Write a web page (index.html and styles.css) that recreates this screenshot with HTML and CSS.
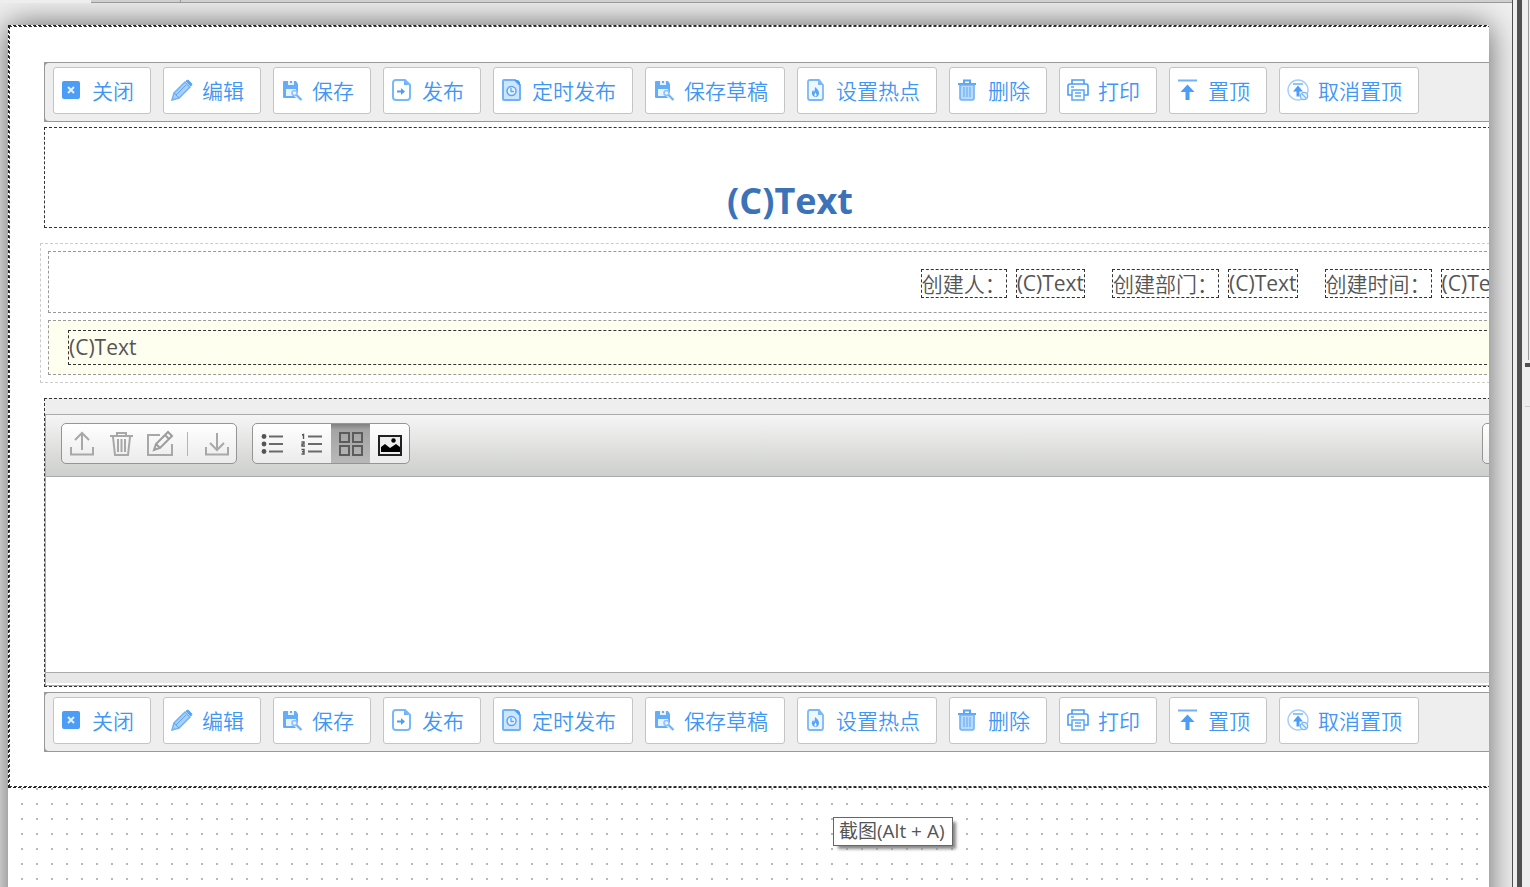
FILE: index.html
```html
<!DOCTYPE html>
<html lang="zh-CN">
<head>
    <meta charset="UTF-8">
    <meta name="viewport" content="width=device-width, initial-scale=1.0">
    <title>表单设计</title>
    <link rel="stylesheet" href="styles.css">
</head>
<body>
    <svg class="sprite" aria-hidden="true">
        <symbol id="i-close" viewBox="0 0 22 22">
            <rect x="1" y="2" width="18" height="18" rx="2" fill="#4b9df5"/>
            <path d="M7 8l6 6M13 8l-6 6" stroke="#e4f1fe" stroke-width="2"/>
        </symbol>
        <symbol id="i-edit" viewBox="0 0 22 22">
            <path d="M1 21l2-7L14 3l5 5L8 19z" fill="#a9d0fb" stroke="#6fb2f8" stroke-width="1.5"/>
            <path d="M5 16l10-10M3 14l5 5" stroke="#5aa6f6" fill="none"/>
            <path d="M15 2l2-1 4 4-1 2z" fill="#5aa6f6" stroke="#5aa6f6"/>
        </symbol>
        <symbol id="i-save" viewBox="0 0 22 22">
            <path d="M2 3q0-1 1-1h12l2 3v9h-2v5H3q-1 0-1-1z" fill="#66adf7"/>
            <path d="M7 2h6v4H7zM5 10h10v7H5z" fill="#e8f3fe"/>
            <path d="M9 2h2v2H9z" fill="#66adf7"/>
            <path d="M13 14l7 7" stroke="#e8f3fe" stroke-width="4"/>
            <circle cx="13.5" cy="14" r="2.500" fill="#e8f3fe" stroke="#8cc1f9" stroke-width="1.5"/>
            <path d="M15.500 16l5 5" stroke="#6fb2f8" stroke-width="2"/>
        </symbol>
        <symbol id="i-publish" viewBox="0 0 22 22">
            <path d="M5 1h9l5 5v12q0 3-3 3H5q-3 0-3-3V4q0-3 3-3z" fill="none" stroke="#7ab8f8" stroke-width="2"/>
            <path d="M13 1v5h5z" fill="#6fb2f8"/>
            <path d="M6 12.500h5" stroke="#4b9df5" stroke-width="2"/>
            <path d="M10 9l4 3.500-4 3.500z" fill="#4b9df5"/>
        </symbol>
        <symbol id="i-timing" viewBox="0 0 22 22">
            <path d="M3 1h11l5 5v14q0 1-1 1H3q-1 0-1-1V2q0-1 1-1z" fill="#cfe5fd" stroke="#6fb2f8" stroke-width="2"/>
            <path d="M13 1l6 6v-4l-2-2z" fill="#4b9df5"/>
            <circle cx="10.500" cy="12" r="4.500" fill="#e8f3fe" stroke="#5aa6f6" stroke-width="1.500"/>
            <path d="M10 9v3.500h3" fill="none" stroke="#5aa6f6" stroke-width="1.300"/>
        </symbol>
        <symbol id="i-hot" viewBox="0 0 22 22">
            <path d="M5 1h9l4 5v13q0 2-2 2H5q-2 0-2-2V3q0-2 2-2z" fill="#eef6ff" stroke="#7ab8f8" stroke-width="1.800"/>
            <path d="M13 1v5h5z" fill="#7ab8f8"/>
            <path d="M10 8c4 3 5 6 3 9q-2 2-5 0c-2-3-1-4 0-6l1 2q1-2 1-5z" fill="#5aa6f6"/>
            <path d="M10.500 13.500q2 3 0 4-2-1 0-4z" fill="#fff"/>
        </symbol>
        <symbol id="i-delete" viewBox="0 0 22 22">
            <path d="M1 5h18M7 4V1.500h6V4" fill="none" stroke="#5aa6f6" stroke-width="2"/>
            <path d="M3 6h14v13q0 2-2 2H5q-2 0-2-2z" fill="#b9d9fc" stroke="#6fb2f8" stroke-width="1.600"/>
            <path d="M7 8v10M10 8v10M13 8v10" stroke="#6fb2f8" stroke-width="1.300"/>
        </symbol>
        <symbol id="i-print" viewBox="0 0 22 22">
            <path d="M5 5V1h12v4M5 16H1V7q0-2 2-2h16q2 0 2 2v9h-4" fill="none" stroke="#4b9df5" stroke-width="1.600"/>
            <path d="M5 11h12v10H5zM8 14h6M8 17h6M4 8h3" fill="none" stroke="#5aa6f6" stroke-width="1.500"/>
        </symbol>
        <symbol id="i-top" viewBox="0 0 22 22">
            <path d="M1 1.500h19" stroke="#6fb2f8" stroke-width="2"/>
            <path d="M10.500 5.500l7 7.500h-5v8h-4v-8h-5z" fill="#4b9df5"/>
        </symbol>
        <symbol id="i-untop" viewBox="0 0 22 22">
            <circle cx="11" cy="11" r="10" fill="#fff" stroke="#a3cdfb" stroke-width="1.400"/>
            <path d="M6 5h10" stroke="#6fb2f8" stroke-width="1.500"/>
            <path d="M11 6.500l5 6h-3.500v5h-3v-5H6z" fill="#4b9df5"/>
            <circle cx="17" cy="17" r="3.700" fill="#e8f3fe" stroke="#7ab8f8" stroke-width="1.300"/>
            <path d="M14.500 14.500l5 5" stroke="#7ab8f8" stroke-width="1.300"/>
        </symbol>
    </svg>

    <main class="stage">
        <div class="tab-strip"><span class="tab active"></span><span class="tab"></span></div>
        <div class="canvas">
            <div class="paper">
                <div class="form">
                    <div class="form-inner">
                        <div class="toolbar-wrap">
                            <div class="toolbar">
                                <button class="tool-btn"><svg><use href="#i-close"/></svg>关闭</button>
                                <button class="tool-btn"><svg><use href="#i-edit"/></svg>编辑</button>
                                <button class="tool-btn"><svg><use href="#i-save"/></svg>保存</button>
                                <button class="tool-btn"><svg><use href="#i-publish"/></svg>发布</button>
                                <button class="tool-btn"><svg><use href="#i-timing"/></svg>定时发布</button>
                                <button class="tool-btn"><svg><use href="#i-save"/></svg>保存草稿</button>
                                <button class="tool-btn"><svg><use href="#i-hot"/></svg>设置热点</button>
                                <button class="tool-btn"><svg><use href="#i-delete"/></svg>删除</button>
                                <button class="tool-btn"><svg><use href="#i-print"/></svg>打印</button>
                                <button class="tool-btn"><svg><use href="#i-top"/></svg>置顶</button>
                                <button class="tool-btn"><svg><use href="#i-untop"/></svg>取消置顶</button>
                            </div>
                        </div>

                        <h1 class="title">(C)Text</h1>

                        <div class="info">
                            <div class="info-row">
                                <div class="field"><span class="box label">创建人：</span><span class="box">(C)Text</span></div>
                                <div class="field"><span class="box label">创建部门：</span><span class="box">(C)Text</span></div>
                                <div class="field"><span class="box label">创建时间：</span><span class="box">(C)Text</span></div>
                            </div>
                            <div class="info-body">
                                <div class="box body-text">(C)Text</div>
                            </div>
                        </div>

                        <div class="attach">
                            <div class="attach-bar">
                                <div class="btn-group">
                                    <button class="icon-btn" aria-label="上传">
                                        <svg viewBox="0 0 28 28"><path d="M3 17v7.500h22V17M14 20V3M7 10l7-7 7 7" fill="none" stroke="#a8a8a8" stroke-width="2"/></svg>
                                    </button>
                                    <button class="icon-btn" aria-label="删除">
                                        <svg viewBox="0 0 28 28"><path d="M3 6h23M10 5V3h9v2M6 7l2 18h13l2-18M11 9v13M14.500 9v13M18 9v13" fill="none" stroke="#a8a8a8" stroke-width="2"/></svg>
                                    </button>
                                    <button class="icon-btn" aria-label="编辑">
                                        <svg viewBox="0 0 28 28"><path d="M14 5H2v20h24V14" fill="none" stroke="#a8a8a8" stroke-width="2"/><path d="M8 20l2-6L22 2l4 4-12 12zM19 5l4 4M10 14l4 4" fill="none" stroke="#9c9c9c" stroke-width="2"/></svg>
                                    </button>
                                    <span class="divider"></span>
                                    <button class="icon-btn" aria-label="下载">
                                        <svg viewBox="0 0 28 28"><path d="M3 17v7.500h22V17M14 3v17M7 13l7 7 7-7" fill="none" stroke="#a8a8a8" stroke-width="2"/></svg>
                                    </button>
                                </div>
                                <div class="btn-group">
                                    <button class="icon-btn" aria-label="列表">
                                        <svg viewBox="0 0 28 28"><path d="M10 6.500h14M10 14h14M10 21.500h14" stroke="#6a6a6a" stroke-width="2"/><g fill="#555"><circle cx="5" cy="6.500" r="2.400"/><circle cx="5" cy="14" r="2.400"/><circle cx="5" cy="21.500" r="2.400"/></g></svg>
                                    </button>
                                    <button class="icon-btn" aria-label="编号列表">
                                        <svg viewBox="0 0 28 28"><path d="M10 6.500h14M10 14h14M10 21.500h14" stroke="#6a6a6a" stroke-width="2"/><path d="M4 5l1.500-.5V9M3.500 12H6v2H4v2h3M3.500 19.500H6V24H3.500M4 21.700h2" fill="none" stroke="#555" stroke-width="1.400"/></svg>
                                    </button>
                                    <button class="icon-btn pressed" aria-label="缩略图">
                                        <svg viewBox="0 0 28 28"><path d="M3 3h9v9H3zM16 3h9v9h-9zM3 16h9v9H3zM16 16h9v9h-9z" fill="none" stroke="#5c5c5c" stroke-width="2"/></svg>
                                    </button>
                                    <button class="icon-btn" aria-label="图片">
                                        <svg viewBox="0 0 28 28"><rect x="3" y="6" width="22" height="19" fill="#eee" stroke="#222" stroke-width="2"/><path d="M5 17l4-3 5 4 6-4 4 3v5H5z" fill="#000"/><circle cx="17.500" cy="10.500" r="2.200" fill="#000"/></svg>
                                    </button>
                                </div>
                                <div class="btn-group last">
                                    <button class="icon-btn" aria-label="更多"></button>
                                </div>
                            </div>
                            <div class="attach-list"></div>
                            <div class="attach-status"></div>
                        </div>

                        <div class="toolbar-wrap">
                            <div class="toolbar">
                                <button class="tool-btn"><svg><use href="#i-close"/></svg>关闭</button>
                                <button class="tool-btn"><svg><use href="#i-edit"/></svg>编辑</button>
                                <button class="tool-btn"><svg><use href="#i-save"/></svg>保存</button>
                                <button class="tool-btn"><svg><use href="#i-publish"/></svg>发布</button>
                                <button class="tool-btn"><svg><use href="#i-timing"/></svg>定时发布</button>
                                <button class="tool-btn"><svg><use href="#i-save"/></svg>保存草稿</button>
                                <button class="tool-btn"><svg><use href="#i-hot"/></svg>设置热点</button>
                                <button class="tool-btn"><svg><use href="#i-delete"/></svg>删除</button>
                                <button class="tool-btn"><svg><use href="#i-print"/></svg>打印</button>
                                <button class="tool-btn"><svg><use href="#i-top"/></svg>置顶</button>
                                <button class="tool-btn"><svg><use href="#i-untop"/></svg>取消置顶</button>
                            </div>
                        </div>
                    </div>
                </div>
            </div>
        </div>
    </main>
    <div class="splitter"></div>
    <aside class="side">
        <div class="side-panel"></div>
        <div class="side-handle"></div>
        <div class="side-line"></div>
    </aside>

    <div class="tooltip" role="tooltip">截图(Alt + A)</div>
</body>
</html>
```
FILE: styles.css
```css
* {
    box-sizing: border-box;
}

body {
    margin: 0;
    height: 100vh;
    display: flex;
    overflow: hidden;
    background: #eee;
    color: #555;
    font-family: "Open Sans", "Noto Sans CJK SC", sans-serif;
    font-size: 21px;
}

.sprite {
    position: absolute;
    width: 0;
    height: 0;
}

.stage {
    flex: 1;
    min-width: 0;
    display: flex;
    flex-direction: column;
    border-right: 1px solid #505050;
}

.tab-strip {
    display: flex;
    height: 3px;
    background: linear-gradient(#d0d0d0 2px, #999 2px);
}

.tab {
    width: 90px;
    border-right: 1px solid #999;
}

.tab.active {
    width: 91px;
    background: #eee;
    border-right: 0;
}

.canvas {
    flex: 1;
    min-height: 0;
    display: flex;
    padding: 22px 23px 0 8px;
    overflow: hidden;
    background: #f0f0f0;
}

.paper {
    flex: 1;
    min-width: 0;
    margin-bottom: -60px;
    overflow: hidden;
    background: radial-gradient(circle at 7px 7px, #b8b8b8 1px, transparent 1px) 7px 7px / 15px 15px #fff;
    box-shadow: 0 0 30px #606060;
}

/* the form is wider than the visible paper */
.form {
    margin-right: -83px;
    border: 1px dashed #222;
    background: #fff;
}

.form-inner {
    border: 1px dashed #333;
    padding: 35px 34px 34px;
}

/* toolbar */
.toolbar-wrap {
    border: 1px solid #999;
    background: #999;
}

.toolbar {
    display: flex;
    gap: 12px;
    padding: 4px 8px 7px;
    border-radius: 4px;
    background: #eee;
}

.tool-btn {
    display: flex;
    align-items: center;
    gap: 9px;
    height: 47px;
    padding: 0 16px 2px 7px;
    border: 1px solid #c4c4c4;
    border-radius: 3px;
    background: #fff;
    color: #4096f5;
    font-family: "Noto Sans CJK SC", sans-serif;
    font-size: 21px;
    font-weight: 350;
    line-height: 30px;
    white-space: nowrap;
    cursor: pointer;
}

.tool-btn svg {
    width: 22px;
    height: 22px;
}

/* title */
.title {
    margin: 5px 0 0;
    padding-top: 46px;
    border: 1px dashed #333;
    color: #3c72b8;
    font-size: 36px;
    line-height: 53px;
    text-align: center;
}

/* creator info and body text */
.info {
    margin: 15px -4px;
    padding: 7px;
    border: 1px dashed #ccc;
}

.info-row {
    display: flex;
    justify-content: flex-end;
    gap: 27px;
    padding: 17px 21px 14px;
    border: 1px dashed #999;
}

.field {
    display: flex;
    gap: 9px;
}

.box {
    border: 1px dashed #333;
    line-height: 27px;
    white-space: nowrap;
}

.label {
    font-family: "Noto Sans CJK SC", sans-serif;
    font-weight: 350;
}

.info-body {
    margin-top: 7px;
    padding: 9px 19px;
    border: 1px dashed #999;
    background: #fffff0;
}

.body-text {
    line-height: 33px;
}

/* attachments */
.attach {
    margin-bottom: 5px;
    padding-top: 15px;
    border: 1px dashed #333;
    background: #eee;
}

.attach-bar {
    display: flex;
    gap: 15px;
    padding: 8px 12px 12px 15px;
    border: solid #aaa;
    border-width: 1px 0 1px 1px;
    background: linear-gradient(#f5f5f5, #cdcfcc);
}

.btn-group {
    display: flex;
    align-items: center;
    height: 41px;
    border: 1px solid #959595;
    border-radius: 5px;
    background: linear-gradient(#fff, #ebebeb);
    overflow: hidden;
}

.btn-group.last {
    margin-left: auto;
}

.icon-btn {
    display: flex;
    align-items: center;
    justify-content: center;
    width: 39px;
    height: 39px;
    padding: 0;
    border: 0;
    background: none;
    cursor: pointer;
}

.icon-btn svg {
    width: 28px;
    height: 28px;
}

.icon-btn.pressed {
    background: linear-gradient(#808080, #a4a4a4 6px, #b8b8b8);
}

.divider {
    width: 1px;
    height: 24px;
    margin: 0 9px 0 8px;
    background: #b5b5b5;
}

.attach-list {
    height: 195px;
    border-left: 1px solid #aaa;
    background: #fff;
}

.attach-status {
    height: 14px;
    border: solid #aaa;
    border-width: 1px 0 1px 1px;
    background: linear-gradient(#e7e7e7 10px, #fff 10px);
}

/* right edge of the designer */
.splitter {
    width: 9px;
    background: linear-gradient(to right, #eee 4px, #505050 4px);
}

.side {
    width: 8px;
}

.side-panel {
    height: 360px;
    margin-right: 1px;
    border-right: 1px solid #999;
}

.side-handle {
    height: 4px;
    margin: 3px 0 39px 3px;
    background: #505050;
}

.side-line {
    height: 1px;
    margin-left: 3px;
    background: #ccc;
}

.tooltip {
    position: absolute;
    left: 833px;
    top: 817px;
    padding: 0 7px 0 5px;
    border: 1px solid #666;
    background: #fff;
    box-shadow: 4px 4px 3px -1px #888;
    font-size: 19px;
    line-height: 27px;
    white-space: nowrap;
}
```
